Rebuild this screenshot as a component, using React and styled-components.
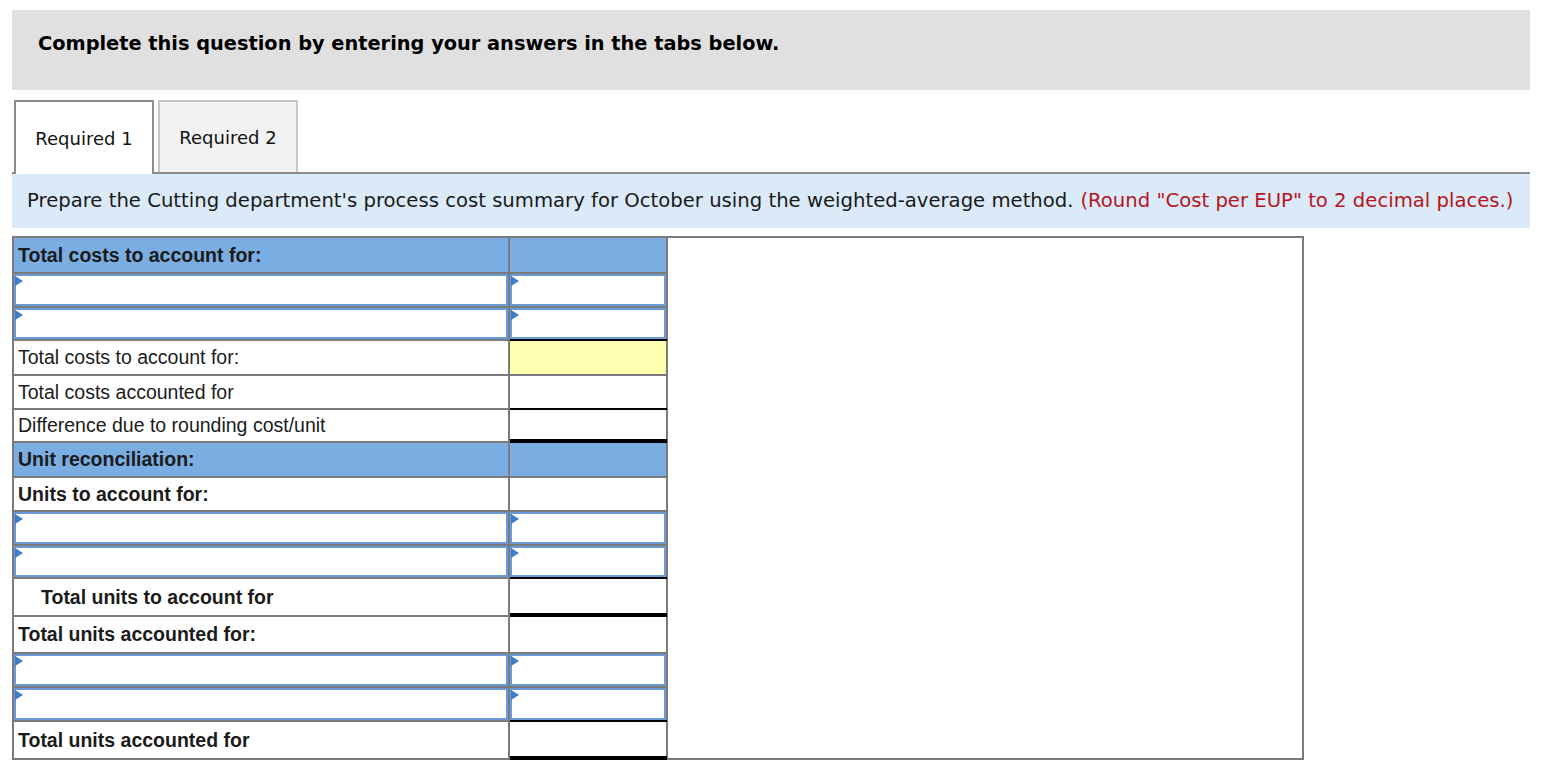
import React from "react";
import styled, { createGlobalStyle } from "styled-components";

const Global = createGlobalStyle`
  html, body { margin: 0; padding: 0; background: #fff; }
  body { font-family: "DejaVu Sans", Verdana, sans-serif; color: #111; }
`;

const Page = styled.div`
  width: 1518px;
  padding: 10px 0 0 12px;
`;

const Prompt = styled.div`
  height: 80px;
  box-sizing: border-box;
  background: #e0e0e0;
  padding: 22px 0 0 26px;
  font-weight: bold;
  font-size: 19.35px;
  color: #000;
  white-space: nowrap;
`;

const TabBar = styled.div`
  margin-top: 10px;
  height: 74px;
  box-sizing: border-box;
  display: flex;
  align-items: flex-end;
  border-bottom: 2px solid #8a8a8a;
`;

const Tab = styled.div`
  box-sizing: border-box;
  width: 140px;
  height: ${(p) => (p.$active ? "74px" : "72px")};
  margin-left: ${(p) => (p.$active ? "2px" : "4px")};
  margin-bottom: ${(p) => (p.$active ? "-2px" : "0")};
  align-self: ${(p) => (p.$active ? "flex-end" : "flex-start")};
  background: ${(p) => (p.$active ? "#fff" : "#f2f2f2")};
  border: 2px solid ${(p) => (p.$active ? "#8c8c8c" : "#c6c6c6")};
  border-bottom: none;
  display: flex;
  align-items: center;
  justify-content: center;
  font-size: 18px;
  color: #111;
`;

const Banner = styled.div`
  height: 54px;
  box-sizing: border-box;
  background: #dbeaf8;
  display: flex;
  align-items: center;
  padding: 0 0 2px 15px;
  font-size: 19.65px;
  color: #1a1a1a;
  white-space: nowrap;
`;

const Hint = styled.span`
  color: #b8141e;
  margin-left: 0.35em;
`;

const Sheet = styled.div`
  margin-top: 8px;
  width: 1292px;
  box-sizing: border-box;
  display: grid;
  grid-template-columns: 494px 156px 634px;
  grid-template-rows: ${(p) => p.$rows};
  gap: 2px;
  padding: 2px;
  background: #7b7b7b;
  font-family: "Liberation Sans", Arial, sans-serif;
  font-size: 19.5px;
  color: #1b1b1b;
`;

const LabelCell = styled.div`
  grid-column: 1;
  background: ${(p) => (p.$head ? "#7aade1" : "#fff")};
  display: flex;
  align-items: center;
  padding-left: ${(p) => (p.$indent ? "27px" : "4px")};
  font-weight: ${(p) => (p.$bold ? "bold" : "normal")};
  white-space: nowrap;
`;

const AmountCell = styled.div`
  grid-column: 2;
  position: relative;
  background: ${(p) => (p.$head ? "#7aade1" : p.$yellow ? "#ffffb0" : "#fff")};

  &::before {
    content: "";
    display: ${(p) => (p.$ruleTop ? "block" : "none")};
    position: absolute;
    left: 0;
    right: -1px;
    top: -2px;
    height: 2px;
    background: #000;
  }

  &::after {
    content: "";
    display: ${(p) => (p.$ruleBottom ? "block" : "none")};
    position: absolute;
    left: 0;
    right: -1px;
    bottom: -2px;
    height: 4px;
    background: #000;
  }
`;

const NoteCell = styled.div`
  grid-column: 3;
  grid-row: 1 / -1;
  background: #fff;
`;

const AnswerSlot = styled.div`
  grid-column: ${(p) => p.$col};
  position: relative;
  background: #fff;

  &::before {
    content: "";
    position: absolute;
    left: 1px;
    top: 2px;
    width: 0;
    height: 0;
    border-left: 8px solid #3d7cc9;
    border-top: 5px solid transparent;
    border-bottom: 5px solid transparent;
  }
`;

const AnswerInput = styled.input`
  display: block;
  width: 100%;
  height: 100%;
  box-sizing: border-box;
  margin: 0;
  padding: 0 6px;
  border: 2px solid #6a9bd7;
  background: #fff;
  outline: none;
  font: inherit;
`;

const rows = [
  { kind: "head", label: "Total costs to account for:", h: 34 },
  { kind: "input", h: 32 },
  { kind: "input", h: 31 },
  { kind: "text", label: "Total costs to account for:", h: 33, yellow: true, top: true },
  { kind: "text", label: "Total costs accounted for", h: 32 },
  { kind: "text", label: "Difference due to rounding cost/unit", h: 31, top: true, bottom: true },
  { kind: "head", label: "Unit reconciliation:", h: 33 },
  { kind: "text", label: "Units to account for:", h: 32, bold: true },
  { kind: "input", h: 32 },
  { kind: "input", h: 31 },
  { kind: "text", label: "Total units to account for", h: 36, bold: true, indent: true, top: true, bottom: true },
  { kind: "text", label: "Total units accounted for:", h: 35, bold: true },
  { kind: "input", h: 32 },
  { kind: "input", h: 32 },
  { kind: "text", label: "Total units accounted for", h: 36, bold: true, top: true, bottom: true },
];

function Row({ row }) {
  if (row.kind === "input") {
    return (
      <>
        <AnswerSlot $col={1}>
          <AnswerInput type="text" readOnly />
        </AnswerSlot>
        <AnswerSlot $col={2}>
          <AnswerInput type="text" readOnly />
        </AnswerSlot>
      </>
    );
  }
  const head = row.kind === "head";
  return (
    <>
      <LabelCell $head={head} $bold={head || row.bold} $indent={row.indent}>
        {row.label}
      </LabelCell>
      <AmountCell $head={head} $yellow={row.yellow} $ruleTop={row.top} $ruleBottom={row.bottom} />
    </>
  );
}

export default function App() {
  const template = rows.map((r) => `${r.h}px`).join(" ");
  return (
    <>
      <Global />
      <Page>
        <Prompt>Complete this question by entering your answers in the tabs below.</Prompt>
        <TabBar>
          <Tab $active>Required 1</Tab>
          <Tab>Required 2</Tab>
        </TabBar>
        <Banner>
          Prepare the Cutting department's process cost summary for October using the weighted-average method.
          <Hint>(Round "Cost per EUP" to 2 decimal places.)</Hint>
        </Banner>
        <Sheet $rows={template}>
          <NoteCell />
          {rows.map((r, i) => (
            <Row key={i} row={r} />
          ))}
        </Sheet>
      </Page>
    </>
  );
}
